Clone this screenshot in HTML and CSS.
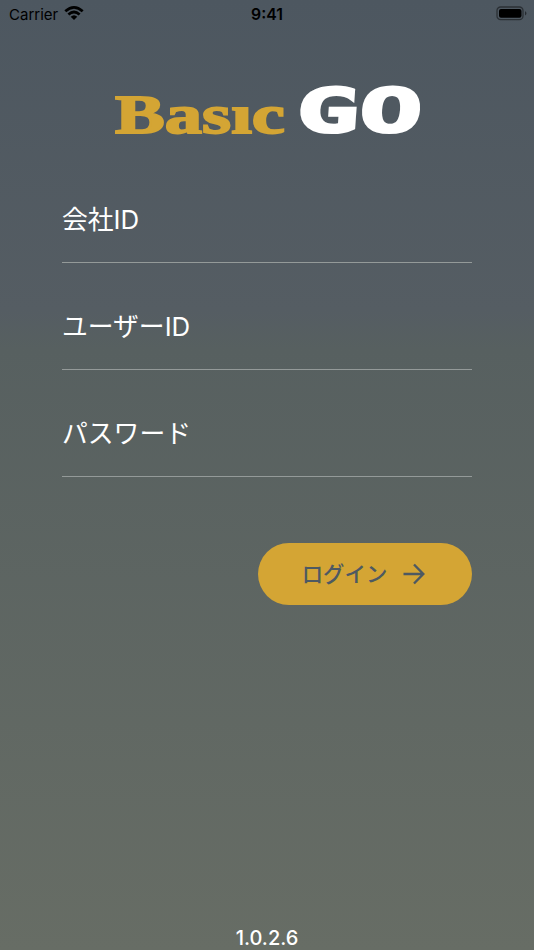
FILE: index.html
```html
<!DOCTYPE html>
<html lang="ja">
<head>
<meta charset="utf-8">
<title>Basic GO</title>
<link rel="stylesheet" href="styles.css">
</head>
<body>
<div class="screen">
  <header class="status">
    <div class="carrier"><span>Carrier</span>
      <svg class="wifi" width="20" height="16" viewBox="0 0 20 16" fill="none" stroke="#000" stroke-width="2.7"><path d="M1.3 6.3Q10 -1.7 18.7 6.3M4.4 9.5Q10 4.5 15.6 9.5"/><path d="M6.7 11.7Q10 8.6 13.3 11.7L10 15Z" fill="#000" stroke="none"/></svg>
    </div>
    <time class="clock">9:41</time>
    <svg class="battery" width="32" height="16" viewBox="0 0 32 16"><rect x="1" y="1" width="26" height="12.6" rx="3.6" fill="none" stroke="#000" stroke-opacity=".45" stroke-width="1.3"/><rect x="3" y="3" width="22.5" height="8.8" rx="2" fill="#000"/><path d="M29 5q3 2.3 0 4.6z" fill="#000" fill-opacity=".5"/></svg>
  </header>
  <main class="login">
    <svg class="logo" width="320" height="60" viewBox="0 0 320 60">
      <text class="basic" x="8" y="53" textLength="170" lengthAdjust="spacingAndGlyphs">Basıc</text>
      <text class="go" transform="translate(188 52) skewX(-4)" textLength="126" lengthAdjust="spacingAndGlyphs">GO</text>
    </svg>
    <form class="form">
      <label class="field">会社ID</label>
      <label class="field">ユーザーID</label>
      <label class="field">パスワード</label>
      <button class="submit" type="button"><span class="caption">ログイン</span>
        <svg width="22" height="22" viewBox="0 0 22 22" fill="none" stroke="#4d5962" stroke-width="2.4"><path d="M.5 11H20M11 1.5L20.3 11L11 20.5"/></svg>
      </button>
    </form>
  </main>
  <footer class="version">1.0.2.6</footer>
</div>
</body>
</html>
```
FILE: styles.css
```css
* { box-sizing: border-box; }
body { margin: 0; font-family: Inter, "Noto Sans CJK JP", sans-serif; }
.screen {
  display: flex; flex-direction: column; align-items: stretch;
  height: 950px; overflow: hidden;
  background: linear-gradient(#4d5760 0, #555d63 310px, #576060 350px, #676d65 100%);
}
.status {
  display: grid; grid-template-columns: 1fr auto 1fr; align-items: center;
  height: 28px; padding: 0 6px 0 9px; color: #000; font-size: 15px;
}
.carrier { display: flex; align-items: center; gap: 6px; }
.wifi { margin-top: -3px; }
.clock { font-weight: 600; font-size: 15.8px; margin-right: 3px; }
.battery { justify-self: end; }
.login { flex: 1; padding: 0 62px; }
.logo { display: block; margin: 52px 0 0 45px; overflow: visible; }
.basic { font: bold 54px "Liberation Serif", serif; fill: #d4a534; stroke: #d4a534; stroke-width: 1.8px; }
.go { font: bold 61px "DejaVu Sans Mono", monospace; fill: #fff; stroke: #fff; stroke-width: 2.5px; stroke-linejoin: miter; }
.form { display: flex; flex-direction: column; }
.field {
  height: 107px; padding-top: 45px; border-bottom: 1px solid #949a99;
  color: #fff; font-size: 25.8px; line-height: 38px; font-weight: 400;
}
.field:first-child { height: 123px; padding-top: 61px; }
.submit {
  display: flex; align-items: center; justify-content: center; gap: 16px;
  align-self: flex-end; width: 214px; height: 62px; margin-top: 66px; padding: 0 3px 0 0;
  border: 0; border-radius: 31px; background: #d4a534; color: #4d5962;
  font-family: inherit; font-size: 21.4px; font-weight: 500;
}
.caption { margin-top: -4px; }
.version { height: 24px; color: #fff; font-size: 20px; font-weight: 500; line-height: 24px; text-align: center; }
```
